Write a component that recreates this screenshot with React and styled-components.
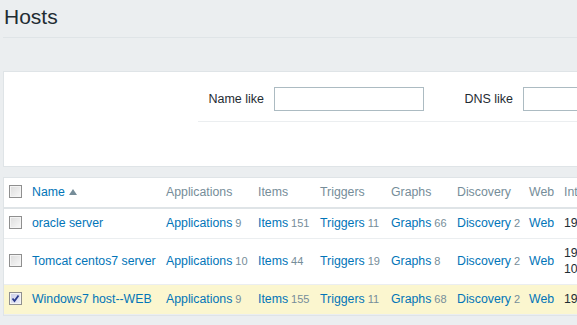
import React from "react";
import styled, { createGlobalStyle } from "styled-components";

const GlobalStyle = createGlobalStyle`
  html, body {
    margin: 0;
    padding: 0;
    overflow: hidden;
    background: #ebeef0;
  }
  body {
    font-family: "Liberation Sans", Arial, sans-serif;
    font-size: 12.3px;
    color: #1f2c33;
  }
`;

const Page = styled.div`
  width: 900px;
  padding: 0 3px;
`;

const Header = styled.div`
  padding: 5px 0 8px 1px;
  border-bottom: 1px solid #dfe4e7;
`;

const Title = styled.h1`
  margin: 0;
  font-size: 21px;
  line-height: 24px;
  font-weight: normal;
  color: #1f2c33;
`;

const Panel = styled.div`
  background: #fff;
  border: 1px solid #dfe4e7;
  margin-top: ${(p) => p.$top}px;
  height: ${(p) => (p.$height ? `${p.$height}px` : "auto")};
  box-sizing: border-box;
`;

const FilterRow = styled.div`
  display: flex;
  align-items: center;
  margin-left: 194px;
  padding: 15px 0 10px;
  border-bottom: 1px solid #ebeef0;
`;

const Label = styled.label`
  width: ${(p) => p.$width}px;
  margin-left: ${(p) => p.$gap || 0}px;
  margin-right: 10px;
  text-align: right;
  color: #1f2c33;
  font-size: 12.5px;
`;

const Input = styled.input`
  width: 150px;
  height: 24px;
  box-sizing: border-box;
  border: 1px solid #acbbc2;
  background: #fff;
  padding: 0 5px;
  font: inherit;
  outline: none;
`;

const Table = styled.table`
  border-collapse: collapse;
  table-layout: fixed;
  width: 705px;
`;

const Th = styled.th`
  width: ${(p) => p.$w}px;
  text-align: left;
  font-weight: normal;
  color: #768d99;
  padding: 6px 5px 7px;
  line-height: 16px;
  border-bottom: 2px solid #dfe4e7;
  white-space: nowrap;
  overflow: hidden;
`;

const Tr = styled.tr`
  background: ${(p) => (p.$selected ? "#fbf6cf" : "#fff")};
`;

const Td = styled.td`
  padding: 6px 5px 7px;
  line-height: 16px;
  border-bottom: 1px solid #ebeef0;
  white-space: nowrap;
  overflow: hidden;
  vertical-align: middle;
  color: #1f2c33;
`;

const Link = styled.a`
  color: #0275b8;
  text-decoration: none;
`;

const Count = styled.span`
  color: #768d99;
  font-size: 11px;
  margin-left: 3px;
`;

const SortArrow = styled.span`
  display: inline-block;
  width: 0;
  height: 0;
  margin-left: 4px;
  border-left: 4px solid transparent;
  border-right: 4px solid transparent;
  border-bottom: 6px solid #768d99;
  vertical-align: 1px;
`;

const Box = styled.span`
  display: inline-block;
  width: 13px;
  height: 13px;
  box-sizing: border-box;
  border: 1px solid #8f8f8f;
  background: ${(p) =>
    p.$checked
      ? "linear-gradient(135deg, #c9cce6, #eef0fa)"
      : "linear-gradient(135deg, #dcdcdc, #f8f8f8)"};
  box-shadow: inset 0 0 0 1px #f4f4f4;
  vertical-align: middle;
  position: relative;
  top: -1px;
`;

const Check = styled.svg`
  position: absolute;
  left: 0;
  top: 0;
`;

function Checkbox({ checked }) {
  return (
    <Box $checked={checked}>
      {checked && (
        <Check width="11" height="11" viewBox="0 0 11 11">
          <path d="M2.5 5.5 L4.5 8 L8.5 2.5" fill="none" stroke="#2a3a8c" strokeWidth="1.8" />
        </Check>
      )}
    </Box>
  );
}

const hosts = [
  { name: "oracle server", apps: 9, items: 151, triggers: 11, graphs: 66, disc: 2, ip: "192.168.1.20: 10050" },
  { name: "Tomcat centos7 server", apps: 10, items: 44, triggers: 19, graphs: 8, disc: 2, ip: ["192.168.1.110:", "10050"] },
  { name: "Windows7 host--WEB", apps: 9, items: 155, triggers: 11, graphs: 68, disc: 2, ip: "192.168.1.30: 10050", selected: true },
];

export default function App() {
  return (
    <Page>
      <GlobalStyle />
      <Header>
        <Title>Hosts</Title>
      </Header>
      <Panel $top={33} $height={96}>
        <FilterRow>
          <Label $width={66}>Name like</Label>
          <Input />
          <Label $width={88} $gap={1}>DNS like</Label>
          <Input />
        </FilterRow>
      </Panel>
      <Panel $top={10}>
        <Table>
          <thead>
            <tr>
              <Th $w={13}><Checkbox /></Th>
              <Th $w={124}><Link>Name</Link><SortArrow /></Th>
              <Th $w={82}>Applications</Th>
              <Th $w={52}>Items</Th>
              <Th $w={61}>Triggers</Th>
              <Th $w={56}>Graphs</Th>
              <Th $w={62}>Discovery</Th>
              <Th $w={25}>Web</Th>
              <Th $w={140}>Interface</Th>
            </tr>
          </thead>
          <tbody>
            {hosts.map((h) => (
              <Tr key={h.name} $selected={h.selected}>
                <Td><Checkbox checked={h.selected} /></Td>
                <Td><Link>{h.name}</Link></Td>
                <Td><Link>Applications</Link><Count>{h.apps}</Count></Td>
                <Td><Link>Items</Link><Count>{h.items}</Count></Td>
                <Td><Link>Triggers</Link><Count>{h.triggers}</Count></Td>
                <Td><Link>Graphs</Link><Count>{h.graphs}</Count></Td>
                <Td><Link>Discovery</Link><Count>{h.disc}</Count></Td>
                <Td><Link>Web</Link></Td>
                <Td>
                  {Array.isArray(h.ip) ? (
                    <>
                      {h.ip[0]}
                      <br />
                      {h.ip[1]}
                    </>
                  ) : (
                    h.ip
                  )}
                </Td>
              </Tr>
            ))}
          </tbody>
        </Table>
      </Panel>
    </Page>
  );
}
